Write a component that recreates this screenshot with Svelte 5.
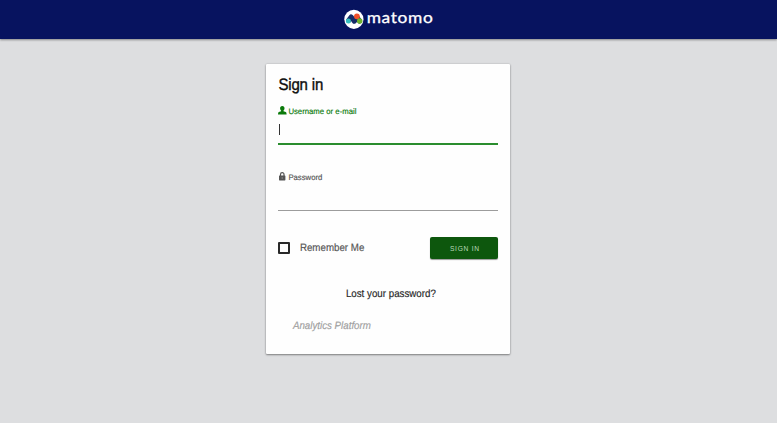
<script>
  let username = $state('');
  let password = $state('');
  let remember = $state(false);
</script>

<div class="page">
  <header>
    <svg class="logo" width="100" height="26" viewBox="0 0 100 26" role="img" aria-label="matomo">
      <circle cx="9.9" cy="10.3" r="9.6" fill="#fff" />
      <path d="M4.6 11.4 L7.2 7.9 L10.3 12.2 L13 8.4 L15.6 12" stroke="#152b68" stroke-width="5" stroke-linecap="round" stroke-linejoin="round" />
      <circle cx="4.4" cy="12" r="2.5" fill="#35bfc0" />
      <circle cx="12.9" cy="7.3" r="2.9" fill="#f0502a" />
      <circle cx="15.7" cy="12" r="2.7" fill="#6fb52d" />
      <text x="22.7" y="13.7" textLength="66.8" lengthAdjust="spacingAndGlyphs">matomo</text>
    </svg>
  </header>

  <form class="card" onsubmit={(e) => e.preventDefault()}>
    <h1>Sign in</h1>
    <div class="field active">
      <label for="login">
        <svg width="9" height="9" viewBox="0 0 9 9"><path fill="currentColor" d="M4.3 0C5.8 0 6.6 1 6.5 2.5C6.4 3.6 6 4.1 5.5 4.6V5.2L7.8 6Q8.6 6.4 8.6 8.4H0Q0 6.4 .8 6L3.1 5.2V4.6C2.6 4.1 2.2 3.6 2.1 2.5C2 1 2.8 0 4.3 0Z" /></svg>
        <span>Username or e-mail</span>
      </label>
      <div class="entry"><i class="caret"></i><input id="login" type="text" bind:value={username} /></div>
    </div>
    <div class="field">
      <label for="password">
        <svg width="9" height="9" viewBox="0 0 9 9"><path fill="none" stroke="currentColor" stroke-width="1.2" d="M2.5 4V2.4a1.75 1.75 0 0 1 3.5 0V4" /><rect x="1" y="3.5" width="6.4" height="4.9" rx=".6" fill="currentColor" /><path d="M4.2 5.2v1.6" stroke="#aaa" stroke-width=".7" /></svg>
        <span>Password</span>
      </label>
      <div class="entry"><input id="password" type="password" bind:value={password} /></div>
    </div>
    <div class="actions">
      <label class="remember"><input type="checkbox" bind:checked={remember} /><span>Remember Me</span></label>
      <button type="submit">SIGN IN</button>
    </div>
    <a class="lost" href="#lost">Lost your password?</a>
    <p>Analytics Platform</p>
  </form>
</div>

<style>
  :global(body) { margin: 0; background: #dddee0; }
  .page {
    height: 423px;
    overflow: hidden;
    background: #dddee0;
    font-family: "Liberation Sans", Arial, sans-serif;
    text-rendering: geometricPrecision;
  }
  header {
    height: 39px;
    box-sizing: border-box;
    padding: 9px 0 0 344px;
    background: #07135f;
    box-shadow: 0 1px 2px rgba(0, 0, 0, .4);
  }
  .logo { display: block; overflow: visible; }
  .logo path { fill: none; }
  .logo text {
    fill: #fff;
    stroke: #fff;
    stroke-width: .3px;
    font: 400 15.5px Lato, sans-serif;
    letter-spacing: .6px;
  }
  .card {
    box-sizing: border-box;
    width: 244px;
    height: 290px;
    margin: 24.5px 0 0 266.4px;
    padding: 12px 12px 0;
    background: #fefefe;
    border-radius: 1px;
    box-shadow: 0 1px 2px rgba(0, 0, 0, .4), 0 0 2px rgba(0, 0, 0, .18);
  }
  h1 {
    margin: 0;
    font-size: 15px;
    font-weight: 400;
    line-height: 19px;
    letter-spacing: -.15px;
    color: #0d0d0d;
    -webkit-text-stroke: .35px #0d0d0d;
    transform: scaleY(1.1);
    transform-origin: 0 60%;
  }
  .field {
    box-sizing: border-box;
    height: 66px;
    padding-top: 11px;
    color: #555;
  }
  .field label {
    display: flex;
    align-items: center;
    gap: 1px;
    height: 10px;
    font-size: 7.75px;
    line-height: 10px;
    -webkit-text-stroke: .15px currentColor;
  }
  .field span { transform: translateY(.9px) scaleY(1.04); }
  .active { color: #0b7a0b; }
  .entry {
    display: flex;
    align-items: flex-start;
    box-sizing: border-box;
    height: 29px;
    padding-top: 8px;
    border-bottom: 1px solid #9c9c9c;
  }
  .active .entry { border-bottom: 2px solid #2a8d2e; }
  .caret { width: 1px; height: 11px; margin-left: .3px; background: #333; }
  .entry input {
    flex: 1;
    min-width: 0;
    height: 12px;
    padding: 0;
    border: 0;
    outline: 0;
    background: none;
    font: inherit;
    font-size: 10px;
  }
  .actions {
    display: flex;
    justify-content: space-between;
    align-items: center;
    height: 22px;
    margin-top: 10px;
  }
  .remember {
    display: flex;
    align-items: center;
    gap: 9.5px;
    font-size: 9.75px;
    color: #555;
    -webkit-text-stroke: .15px currentColor;
  }
  .remember span { transform: translateY(.8px) scaleY(1.1); }
  .remember input {
    appearance: none;
    box-sizing: border-box;
    width: 12px;
    height: 12px;
    margin: 0;
    border: 2px solid #292929;
    border-radius: 1px;
  }
  button {
    width: 68px;
    height: 22px;
    padding: 1px 0 0 1px;
    border: 0;
    border-radius: 2px;
    background: #0d570d;
    color: #b9d8b9;
    font: 6.7px "Liberation Sans", Arial, sans-serif;
    letter-spacing: .72px;
    box-shadow: 0 1px 1px rgba(0, 0, 0, .4);
  }
  .lost {
    display: block;
    margin: 28px 0 0 67.5px;
    color: #292929;
    font-size: 9.75px;
    line-height: 12px;
    text-decoration: none;
    -webkit-text-stroke: .15px currentColor;
    transform: translateY(1.3px) scaleY(1.1);
  }
  p {
    margin: 20px 0 0 14.5px;
    color: #a0a0a0;
    font-size: 9.75px;
    font-style: italic;
    line-height: 12px;
    -webkit-text-stroke: .15px currentColor;
    transform: translateY(1.5px) scaleY(1.1);
  }
</style>
